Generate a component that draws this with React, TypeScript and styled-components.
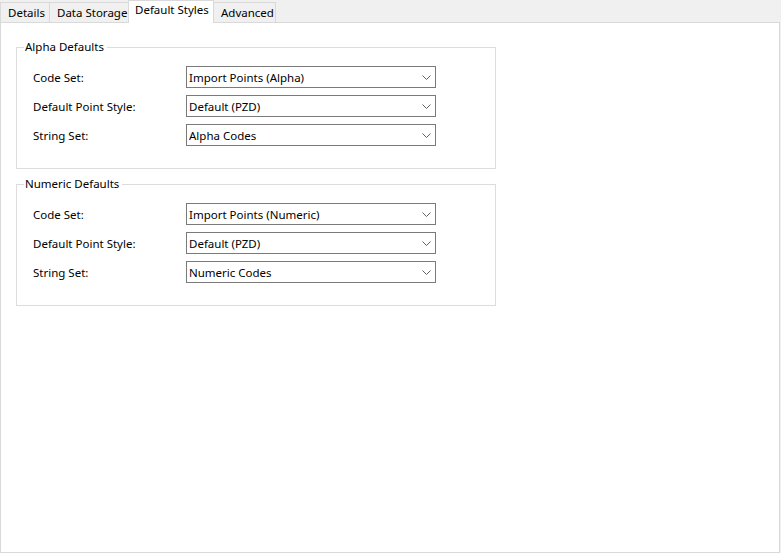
import React from 'react';
import styled, { createGlobalStyle } from 'styled-components';

const GlobalStyle = createGlobalStyle`
  html, body {
    margin: 0;
    padding: 0;
    background: #f0f0f0;
  }
  body {
    font-family: "Noto Sans", "Open Sans", sans-serif;
    font-size: 11.5px;
    color: #000000;
  }
`;

const Window = styled.div`
  width: 781px;
  height: 553px;
  display: flex;
  flex-direction: column;
  background: #f0f0f0;
`;

const TabStrip = styled.div`
  display: flex;
  align-items: flex-end;
  height: 23px;
  margin-bottom: -1px;
  position: relative;
  z-index: 1;
`;

const Tab = styled.div<{ $active?: boolean; $first?: boolean; $width: number }>`
  box-sizing: border-box;
  width: ${(p) => p.$width}px;
  height: ${(p) => (p.$active ? 23 : 21)}px;
  padding: ${(p) => (p.$active ? '1px 0 0 6px' : '2px 0 0 7px')};
  margin-left: ${(p) => (p.$active ? '-1px' : '0')};
  background: ${(p) => (p.$active ? '#ffffff' : '#f0f0f0')};
  border-top: 1px solid #d9d9d9;
  border-right: 1px solid #d9d9d9;
  border-bottom: ${(p) => (p.$active ? 'none' : '1px solid #d9d9d9')};
  border-left: ${(p) => (p.$first || p.$active ? '1px solid #d9d9d9' : 'none')};
  white-space: nowrap;
  line-height: 16px;
`;

const Panel = styled.div`
  box-sizing: border-box;
  width: 780px;
  height: 531px;
  background: #ffffff;
  border: 1px solid #d9d9d9;
  padding: 16px 0 0 15px;
  display: flex;
  flex-direction: column;
  gap: 7px;
`;

const GroupBox = styled.fieldset`
  box-sizing: border-box;
  width: 480px;
  height: 130px;
  margin: 0;
  padding: 0;
  border: 1px solid #dcdcdc;
`;

const Legend = styled.legend`
  padding: 0 3px 0 1px;
  margin-left: 7px;
  line-height: 16px;
`;

const GroupBody = styled.div`
  display: flex;
  flex-direction: column;
  gap: 7px;
  padding: 11px 0 0 16px;
`;

const Row = styled.div`
  display: flex;
  align-items: center;
  height: 22px;
`;

const Label = styled.span`
  width: 153px;
`;

const Combo = styled.div`
  box-sizing: border-box;
  width: 250px;
  height: 22px;
  border: 1px solid #7a7a7a;
  background: #ffffff;
  display: flex;
  align-items: center;
  justify-content: space-between;
  padding: 0 4px 0 2px;
`;

const Chevron = () => (
  <svg width="9" height="5" viewBox="0 0 9 5">
    <path d="M0.5 0.5 L4.5 4.5 L8.5 0.5" fill="none" stroke="#606060" strokeWidth="1" />
  </svg>
);

const tabs = [
  { name: 'Details', width: 50 },
  { name: 'Data Storage', width: 79 },
  { name: 'Default Styles', width: 86, active: true },
  { name: 'Advanced', width: 62 },
];

const groups = [
  {
    title: 'Alpha Defaults',
    rows: [
      ['Code Set:', 'Import Points (Alpha)'],
      ['Default Point Style:', 'Default (PZD)'],
      ['String Set:', 'Alpha Codes'],
    ],
  },
  {
    title: 'Numeric Defaults',
    rows: [
      ['Code Set:', 'Import Points (Numeric)'],
      ['Default Point Style:', 'Default (PZD)'],
      ['String Set:', 'Numeric Codes'],
    ],
  },
];

export default function App() {
  return (
    <Window>
      <GlobalStyle />
      <TabStrip>
        {tabs.map((t, i) => (
          <Tab key={t.name} $width={t.width} $active={t.active} $first={i === 0}>
            {t.name}
          </Tab>
        ))}
      </TabStrip>
      <Panel>
        {groups.map((g) => (
          <GroupBox key={g.title}>
            <Legend>{g.title}</Legend>
            <GroupBody>
              {g.rows.map(([label, value]) => (
                <Row key={label}>
                  <Label>{label}</Label>
                  <Combo>
                    <span>{value}</span>
                    <Chevron />
                  </Combo>
                </Row>
              ))}
            </GroupBody>
          </GroupBox>
        ))}
      </Panel>
    </Window>
  );
}
